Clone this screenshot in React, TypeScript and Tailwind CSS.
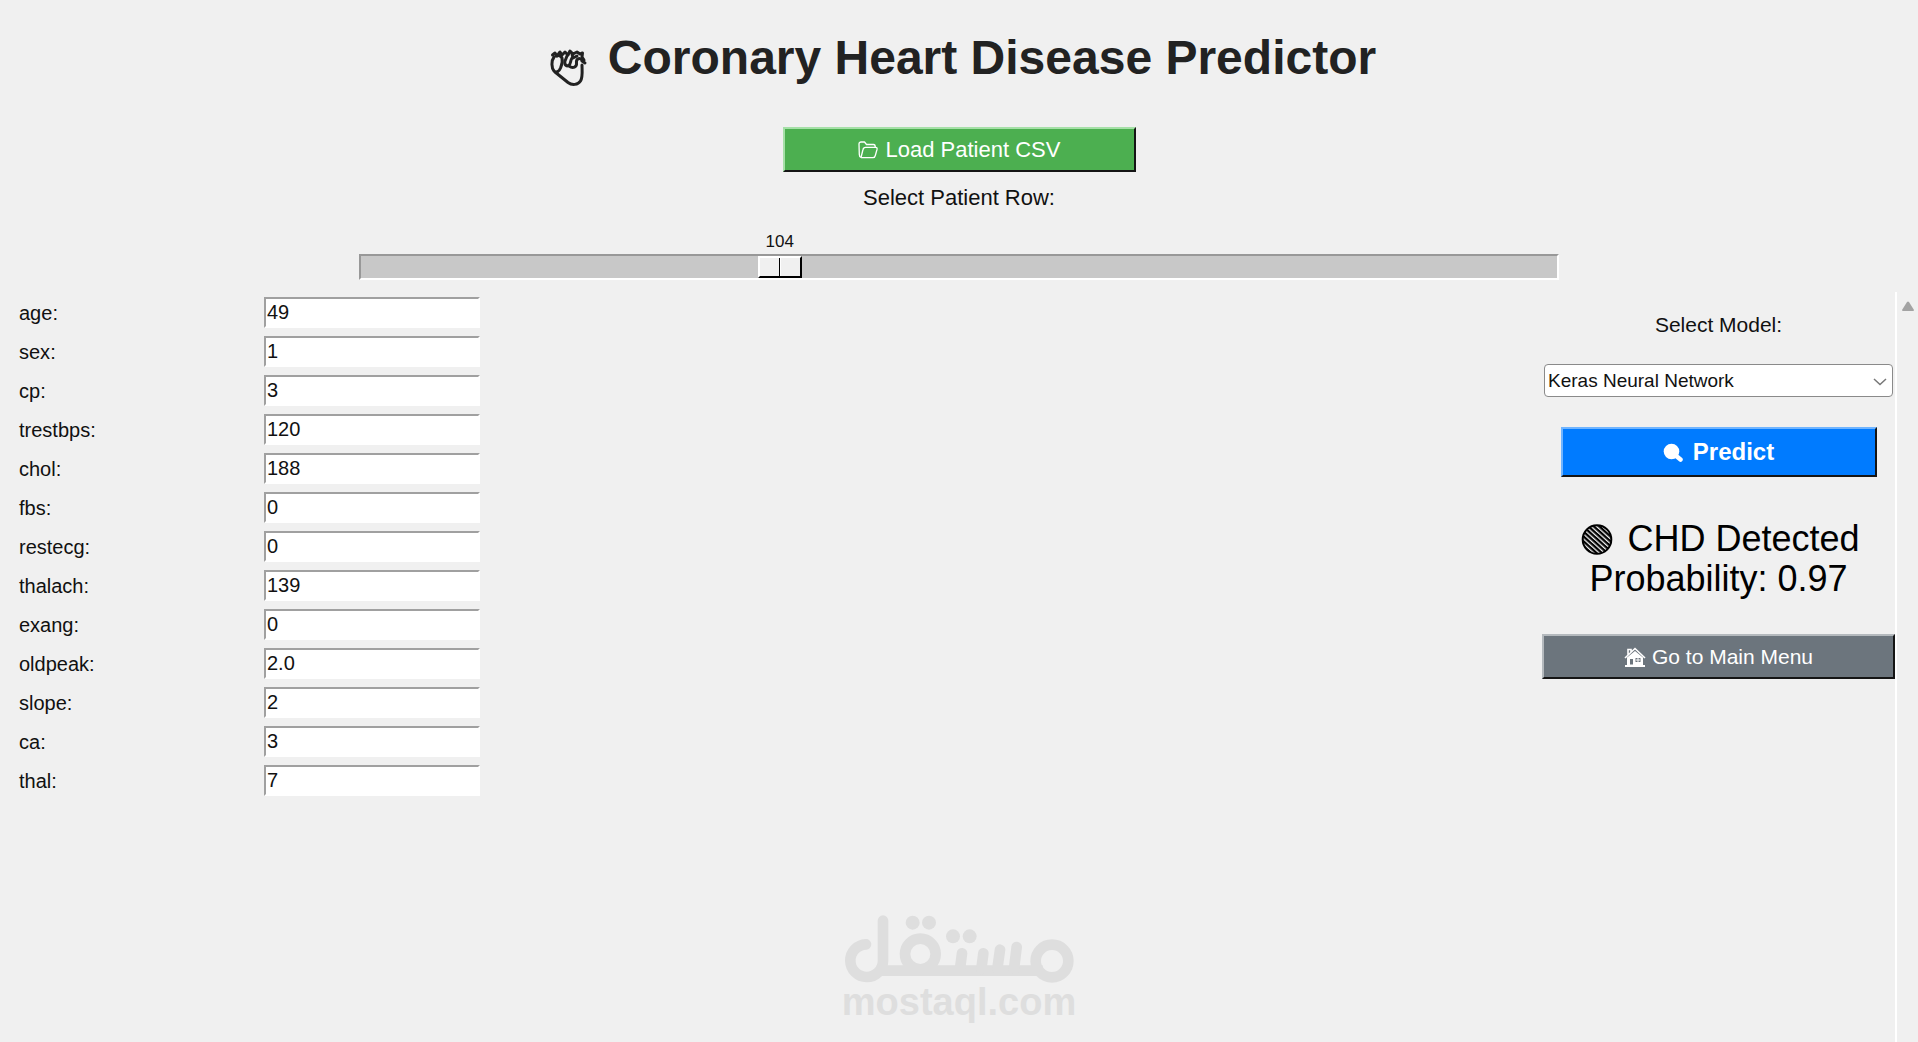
import React, {useState} from "react";

interface Field {
  name: string;
  value: string;
}

interface RaisedButtonProps {
  className: string;
  children: React.ReactNode;
}

const LAST_ROW = 302;

const fields: Field[] = [
  {name: "age", value: "49"},
  {name: "sex", value: "1"},
  {name: "cp", value: "3"},
  {name: "trestbps", value: "120"},
  {name: "chol", value: "188"},
  {name: "fbs", value: "0"},
  {name: "restecg", value: "0"},
  {name: "thalach", value: "139"},
  {name: "exang", value: "0"},
  {name: "oldpeak", value: "2.0"},
  {name: "slope", value: "2"},
  {name: "ca", value: "3"},
  {name: "thal", value: "7"},
];

const models = ["Keras Neural Network", "Random Forest", "Logistic Regression"];

// icons
function HeartIcon() {
  return (
    <svg
      viewBox="0 0 54 60"
      className="w-[54px] h-[60px]"
      fill="none"
      stroke="currentColor"
      strokeWidth="3"
      strokeLinecap="round"
      strokeLinejoin="round"
      aria-hidden="true"
    >
      <path d="M12 29C9 33 9.500 40 12 43C14 45 17 44 18.500 40C19.500 37 21 34 20 30C19 28 17 27 14 28" />
      <path d="M13 44L26 54.500C30 57.500 36 57 38.500 53C41 49 40 42 40 37" />
      <path d="M10.500 27L13 25L15 28L18 24L20 27L23 24L26 27L28 23L31 26L35 24L38 26L40.500 25L40 29L42 32" />
      <path d="M25 28L23 33C22 37 25 39 27 37C29 36 28 33 30 30" />
      <path d="M27 38C31 41 35 39 34.500 35C34 31 37 29 40 32" />
      <path d="M30 26L31 30L35 28M40 33L43 35" />
    </svg>
  );
}

function FolderIcon() {
  return (
    <svg
      viewBox="0 0 20 18"
      className="w-5 h-[18px]"
      fill="none"
      stroke="currentColor"
      strokeWidth="1.3"
      strokeLinejoin="round"
      aria-hidden="true"
    >
      <path d="M3 16.5C1.6 16 1.3 15 1.3 13.5L1 3C1 1.6 2 1 3 1H6.5L8.5 3.5H15.5C17 3.5 17.3 4.5 17.3 6.3" />
      <path d="M3 16.5L5 8.5C5.3 7 6 6.3 7.5 6.3H17.5C19 6.3 19.3 7 19 8.5L17.3 14.5C17 16 16.3 16.7 15 16.7H3" />
    </svg>
  );
}

function SearchIcon() {
  return (
    <svg viewBox="0 0 20 20" className="size-5" fill="currentColor" aria-hidden="true">
      <circle cx="8.5" cy="9.5" r="7.8" />
      <path
        d="M12 13L17.5 17.5"
        stroke="currentColor"
        strokeWidth="4.5"
        strokeLinecap="round"
      />
    </svg>
  );
}

function CircleIcon() {
  return (
    <svg viewBox="0 0 32 32" className="size-8 mx-1" aria-hidden="true">
      <defs>
        <pattern
          id="hatch"
          width="3.6"
          height="3.6"
          patternUnits="userSpaceOnUse"
          patternTransform="rotate(42)"
        >
          <rect width="3.6" height="2.3" fill="#000" />
        </pattern>
      </defs>
      <circle cx="16" cy="16.5" r="14.3" fill="url(#hatch)" stroke="#000" strokeWidth="2" />
    </svg>
  );
}

function HomeIcon() {
  return (
    <svg viewBox="0 0 22 20" className="w-[22px] h-5" aria-hidden="true">
      <path
        d="M1 11L11 1.5L21 11M4 8V2.5H7V5"
        fill="none"
        stroke="currentColor"
        strokeWidth="1.6"
      />
      <path
        fill="currentColor"
        fillRule="evenodd"
        d="M3 10.5L11 4L19 10.5V18H21V20H1V18H3ZM6 12V17.5H9V12ZM11.5 11V15H16.5V11Z"
      />
      <path d="M12 13H16M14 11V15" stroke="currentColor" strokeWidth="1" />
    </svg>
  );
}

function Watermark() {
  return (
    <div className="absolute inset-x-0 bottom-[21px] flex flex-col items-center text-[#dedede] pointer-events-none">
      <svg
        viewBox="72 44 690 204"
        className="w-[230px] h-[68px]"
        fill="none"
        stroke="currentColor"
        strokeLinecap="round"
        aria-hidden="true"
      >
        <path strokeWidth="32" d="M138 132A49 49 0 1 0 189 182V61" />
        <path strokeWidth="32" strokeLinecap="butt" d="M170 211H668" />
        <circle cx="301" cy="161" r="46" strokeWidth="32" />
        <circle cx="696" cy="182" r="49" strokeWidth="32" />
        <path strokeWidth="32" d="M426 159L420 206M490 159L484 206M540 148L532 206M590 140L582 206" />
        <g fill="currentColor" stroke="none">
          <circle cx="278" cy="67" r="21" />
          <circle cx="327" cy="67" r="21" />
          <circle cx="399" cy="108" r="21" />
          <circle cx="449" cy="108" r="21" />
          <path d="M255 195H350V227H255Z" />
        </g>
      </svg>
      <span className="text-[38px] leading-[38px] font-bold">mostaql.com</span>
    </div>
  );
}

function RaisedButton({className, children}: RaisedButtonProps) {
  return (
    <button
      type="button"
      className={`flex items-center justify-center border-2 border-r-[#151515] border-b-[#151515] ${className}`}
    >
      {children}
    </button>
  );
}

function RowSlider() {
  const [row, setRow] = useState(104);
  const ratio = row / LAST_ROW;

  return (
    <div className="w-full max-w-[1200px] flex flex-col items-center">
      <label htmlFor="row" className="text-[22px] leading-7">
        Select Patient Row:
      </label>
      <div className="relative w-full pt-[42px]">
        <output
          htmlFor="row"
          className="absolute top-5 -translate-x-1/2 text-[17px] leading-5"
          style={{left: `calc(24px + (100% - 48px) * ${ratio})`}}
        >
          {row}
        </output>
        <input
          id="row"
          type="range"
          min={0}
          max={LAST_ROW}
          value={row}
          onChange={(e) => setRow(Number(e.target.value))}
          className="block w-full h-[26px] appearance-none bg-[#c8c8c8] border-2 border-t-[#989898] border-l-[#989898] border-r-white border-b-white [&::-webkit-slider-thumb]:appearance-none [&::-webkit-slider-thumb]:w-11 [&::-webkit-slider-thumb]:h-[22px] [&::-webkit-slider-thumb]:border-2 [&::-webkit-slider-thumb]:border-t-white [&::-webkit-slider-thumb]:border-l-white [&::-webkit-slider-thumb]:border-r-black [&::-webkit-slider-thumb]:border-b-black [&::-webkit-slider-thumb]:bg-[linear-gradient(90deg,#f0f0f0_19px,#000_19px,#000_20px,#fff_20px,#fff_21px,#f0f0f0_21px)]"
        />
      </div>
    </div>
  );
}

function PatientForm() {
  return (
    <form className="flex flex-col gap-2 pt-[5px] pl-[19px]">
      {fields.map((f) => (
        <div key={f.name} className="flex items-center">
          <label htmlFor={f.name} className="w-[245px] text-[20px] leading-6">
            {f.name}:
          </label>
          <input
            id={f.name}
            type="text"
            defaultValue={f.value}
            className="w-[216px] h-[31px] pl-px bg-white border-2 border-t-[#a0a0a0] border-l-[#a0a0a0] border-r-white border-b-white text-[20px] leading-6"
          />
        </div>
      ))}
    </form>
  );
}

function ModelPanel() {
  return (
    <div className="w-[353px] flex flex-col items-center pt-[19px]">
      <label htmlFor="model" className="text-[21px] leading-7">
        Select Model:
      </label>
      <div className="relative w-full px-0.5 mt-[25px]">
        <select
          id="model"
          className="block w-full h-[33px] appearance-none bg-white border border-[#8a8a8a] rounded-sm pl-[3px] text-[19px] leading-6"
        >
          {models.map((m) => (
            <option key={m}>{m}</option>
          ))}
        </select>
        <svg
          viewBox="0 0 14 8"
          className="absolute right-2 top-[14px] w-[14px] h-2 pointer-events-none"
          fill="none"
          stroke="#777"
          strokeWidth="1.5"
          aria-hidden="true"
        >
          <path d="M1 1L7 6.5L13 1" />
        </svg>
      </div>
      <RaisedButton className="w-[316px] h-[50px] mt-[30px] gap-2.5 bg-[#007bff] border-t-[#6fb4ff] border-l-[#6fb4ff] text-white text-[24px] font-bold">
        <SearchIcon />
        Predict
      </RaisedButton>
      <div className="mt-[42px] flex flex-col items-center text-[36px] leading-10 text-black">
        <div className="flex items-center gap-2.5">
          <CircleIcon />
          CHD Detected
        </div>
        <div>Probability: 0.97</div>
      </div>
      <RaisedButton className="w-full h-[45px] mt-[35px] gap-1.5 bg-[#6c757d] border-t-[#b4b9bd] border-l-[#b4b9bd] text-white text-[21px]">
        <HomeIcon />
        Go to Main Menu
      </RaisedButton>
    </div>
  );
}

export default function App() {
  return (
    <div className="relative min-h-screen flex flex-col bg-[#f0f0f0] text-[#111] font-['Liberation_Sans',Arial,sans-serif]">
      <header className="flex flex-col items-center pt-7">
        <h1 className="flex items-center gap-3 text-[48px] leading-[60px] font-bold text-[#222]">
          <HeartIcon />
          Coronary Heart Disease Predictor
        </h1>
        <RaisedButton className="w-[353px] h-[45px] mt-[39px] mb-3 gap-2 bg-[#4caf50] border-t-[#a5e0a7] border-l-[#a5e0a7] text-white text-[22px]">
          <FolderIcon />
          Load Patient CSV
        </RaisedButton>
        <RowSlider />
      </header>

      <main className="flex-1 flex mt-3">
        <div className="flex-1 flex justify-between">
          <PatientForm />
          <ModelPanel />
        </div>
        {/* scrollbar */}
        <div className="w-[23px] flex justify-center border-l-2 border-white pt-[9px]">
          <svg viewBox="0 0 12 10" className="w-3 h-2.5" fill="#a3a3a3" aria-hidden="true">
            <path d="M5 1Q6 0 7 1L12 9Q12 10 11 10H1Q0 10 0 9Z" />
          </svg>
        </div>
      </main>

      <Watermark />
    </div>
  );
}
